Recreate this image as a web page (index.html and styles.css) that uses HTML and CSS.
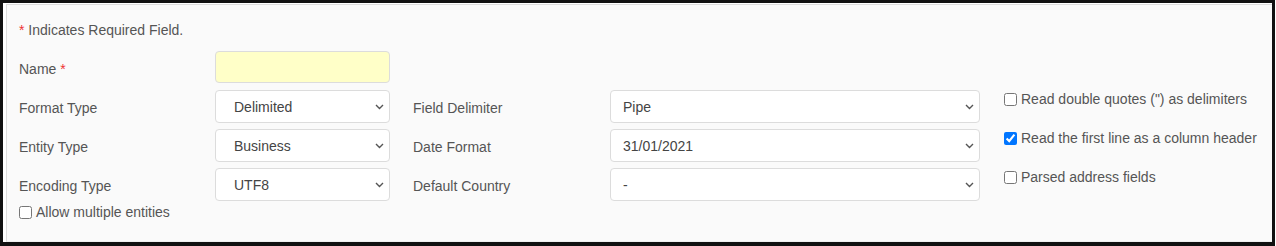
FILE: index.html
```html
<html>
  <head>
    <title>Import Profile</title>
    <link rel="stylesheet" href="styles.css">
  </head>
  <body>
    <div class="frame">
      <div class="panel">
        <p class="note"><span class="req">*</span> Indicates Required Field.</p>

        <div class="fields">
          <label class="label" for="name">Name <span class="req">*</span></label>
          <input class="input required" type="text" id="name" />
          <div></div>
          <div></div>
          <div></div>
          <div></div>
          <div></div>

          <label class="label" for="formatType">Format Type</label>
          <div class="select"><select class="input wide" id="formatType"><option>Delimited</option></select><svg class="arrow" width="9" height="6" viewBox="0 0 9 6"><path d="M1 1 L4.5 4.5 L8 1" /></svg></div>
          <div></div>
          <label class="label" for="fieldDelimiter">Field Delimiter</label>
          <div class="select"><select class="input" id="fieldDelimiter"><option>Pipe</option></select><svg class="arrow" width="9" height="6" viewBox="0 0 9 6"><path d="M1 1 L4.5 4.5 L8 1" /></svg></div>
          <div></div>
          <label class="check"><input type="checkbox" /> Read double quotes (") as delimiters</label>

          <label class="label" for="entityType">Entity Type</label>
          <div class="select"><select class="input wide" id="entityType"><option>Business</option></select><svg class="arrow" width="9" height="6" viewBox="0 0 9 6"><path d="M1 1 L4.5 4.5 L8 1" /></svg></div>
          <div></div>
          <label class="label" for="dateFormat">Date Format</label>
          <div class="select"><select class="input" id="dateFormat"><option>31/01/2021</option></select><svg class="arrow" width="9" height="6" viewBox="0 0 9 6"><path d="M1 1 L4.5 4.5 L8 1" /></svg></div>
          <div></div>
          <label class="check"><input type="checkbox" checked="checked" /> Read the first line as a column header</label>

          <label class="label" for="encodingType">Encoding Type</label>
          <div class="select"><select class="input wide" id="encodingType"><option>UTF8</option></select><svg class="arrow" width="9" height="6" viewBox="0 0 9 6"><path d="M1 1 L4.5 4.5 L8 1" /></svg></div>
          <div></div>
          <label class="label" for="defaultCountry">Default Country</label>
          <div class="select"><select class="input" id="defaultCountry"><option>-</option></select><svg class="arrow" width="9" height="6" viewBox="0 0 9 6"><path d="M1 1 L4.5 4.5 L8 1" /></svg></div>
          <div></div>
          <label class="check"><input type="checkbox" /> Parsed address fields</label>
        </div>

        <label class="check multiple"><input type="checkbox" /> Allow multiple entities</label>
      </div>
    </div>
  </body>
</html>
```

FILE: styles.css
```css
body {
  margin: 0;
  background: #fff;
  font-family: "Liberation Sans", Arial, sans-serif;
  font-size: 14px;
  color: #555;
}
.frame {
  border: 3px solid #111;
  border-bottom-width: 4px;
  margin: 0 1px 0 0;
  padding: 1px 0 0 3px;
  height: 238px;
}
.panel {
  border-top: 1px solid #ddd;
  border-left: 1px solid #ddd;
  border-bottom: 1px solid #eee;
  background: #fafafa;
  height: 100%;
  box-sizing: border-box;
  padding: 12px 0 0 12px;
}
.note {
  margin: 0 0 8px 0;
  line-height: 26px;
}
.req {
  color: #e33;
}
/* Grid of fields */
.fields {
  display: grid;
  grid-template-columns: 196px 175px 23px 197px 370px 24px 1fr;
  grid-auto-rows: 33px;
  row-gap: 6px;
}
.label {
  align-self: center;
  padding-top: 3px;
}
.input {
  width: 100%;
  height: 33px;
  box-sizing: border-box;
  border: 1px solid #dcdcdc;
  border-radius: 4px;
  background-color: #fff;
  font-family: "Liberation Sans", Arial, sans-serif;
  font-size: 14px;
  color: #444;
  padding: 0 20px 0 12px;
  margin: 0;
  appearance: none;
  outline: none;
}
.input.required {
  background-color: #ffffc8;
  height: 32px;
  padding: 0 8px;
}
.input.wide {
  padding-left: 18px;
}
/* Dropdown chevron */
.select {
  position: relative;
}
.arrow {
  position: absolute;
  right: 6px;
  top: 14px;
}
.arrow path {
  fill: none;
  stroke: #555;
  stroke-width: 1.4;
}
.check {
  display: flex;
  align-items: center;
  align-self: start;
  padding-top: 1px;
  white-space: nowrap;
}
.check input {
  margin: 0 4px 0 0;
  width: 13px;
  height: 13px;
}
.multiple {
  margin-top: 2px;
}
```
